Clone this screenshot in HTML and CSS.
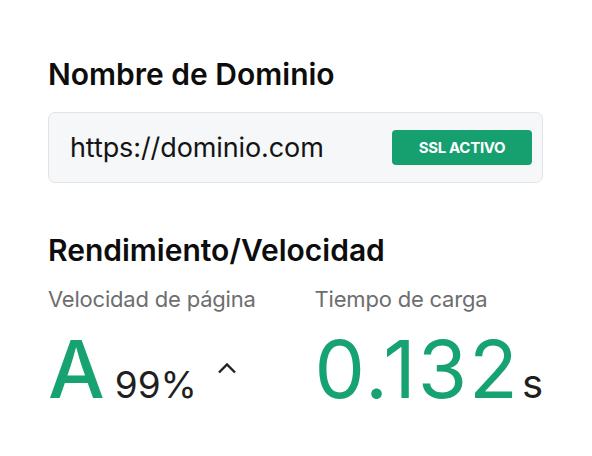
FILE: index.html
```html
<!DOCTYPE html>
<html>
<head>
<meta charset="utf-8">
<link rel="stylesheet" href="styles.css">
</head>
<body>
<main class="panel">
  <section class="domain">
    <h2 class="title">Nombre de Dominio</h2>
    <div class="url-box">
      <span class="url">https://dominio.com</span>
      <span class="badge">SSL ACTIVO</span>
    </div>
  </section>
  <section class="perf">
    <h2 class="title">Rendimiento/Velocidad</h2>
    <div class="metrics">
      <div class="metric speed">
        <div class="label">Velocidad de página</div>
        <div class="value-row">
          <span class="grade">A</span>
          <span class="pct">99%</span>
          <svg class="caret" width="20" height="12" viewBox="0 0 20 12"><path d="M2 10.5 L10 2.5 L18 10.5" fill="none" stroke="#222" stroke-width="2.4"/></svg>
        </div>
      </div>
      <div class="metric load">
        <div class="label">Tiempo de carga</div>
        <div class="value-row">
          <span class="time">0.132</span><span class="unit">s</span>
        </div>
      </div>
    </div>
  </section>
</main>
</body>
</html>
```

FILE: styles.css
```css
* { box-sizing: border-box; }
html, body { margin: 0; padding: 0; background: #fff; }
body { font-family: Inter, "Noto Sans", sans-serif; color: #111; }
.panel { width: 592px; height: 456px; padding: 56px 49px 0 48px; }
.title { margin: 0; font-size: 30px; font-weight: 600; letter-spacing: 0; line-height: 36px; color: #0d0d0d; }
.url-box { margin-top: 20px; height: 71px; border: 1.5px solid #e1e4e6; border-radius: 7px; background: #f5f7f8; display: flex; align-items: center; justify-content: space-between; padding: 0 10px 0 21px; }
.url { font-size: 27px; font-weight: 400; color: #141414; letter-spacing: -0.1px; }
.badge { width: 140px; height: 35px; border-radius: 4px; background: #16a06f; color: #fff; font-size: 15px; font-weight: 700; display: flex; align-items: center; justify-content: center; letter-spacing: -0.3px; }
.perf { margin-top: 49px; }
.metrics { display: flex; margin-top: 18px; }
.metric.speed { width: 271px; }
.label { font-size: 22px; color: #6e6e6e; letter-spacing: -0.2px; line-height: 26px; }
.value-row { display: flex; align-items: baseline; margin-top: 17px; }
.grade { font-size: 80px; font-weight: 500; color: #17a271; line-height: 80px; }
.pct { font-size: 37px; color: #1f1f1f; margin-left: 10px; }
.caret { margin-left: 20px; align-self: flex-start; margin-top: 33px; }
.time { font-size: 80px; font-weight: 400; color: #17a271; line-height: 80px; letter-spacing: 2px; }
.unit { font-size: 40px; color: #1f1f1f; margin-left: 2px; }
```
